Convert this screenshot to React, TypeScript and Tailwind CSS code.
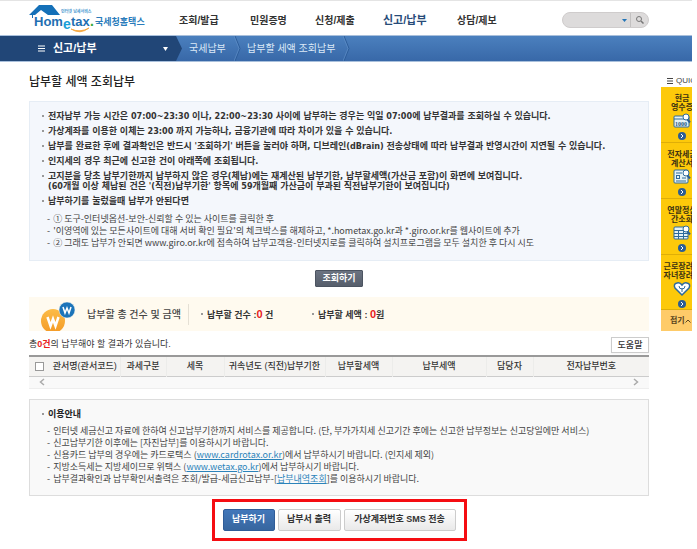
import type { ReactNode } from "react";
import clsx from "clsx";

const menus = [
    { label: "조회/발급", className: "w-[71px]" },
    { label: "민원증명", className: "w-[65px]" },
    { label: "신청/제출", className: "w-[68px]" },
    { label: "신고/납부", className: "w-[74px]", active: true },
    { label: "상담/제보", className: "w-[60px]" },
];

const notices: ReactNode[] = [
    "전자납부 가능 시간은 07:00~23:30 이나, 22:00~23:30 사이에 납부하는 경우는 익일 07:00에 납부결과를 조회하실 수 있습니다.",
    "가상계좌를 이용한 이체는 23:00 까지 가능하나, 금융기관에 따라 차이가 있을 수 있습니다.",
    "납부를 완료한 후에 결과확인은 반드시 '조회하기' 버튼을 눌러야 하며, 디브레인(dBrain) 전송상태에 따라 납부결과 반영시간이 지연될 수 있습니다.",
    "인지세의 경우 최근에 신고한 건이 아래쪽에 조회됩니다.",
    <>
        고지분을 당초 납부기한까지 납부하지 않은 경우(체납)에는 재계산된 납부기한, 납부할세액(가산금 포함)이 화면에 보여집니다.
        <br />
        (60개월 이상 체납된 건은 '(직전)납부기한' 항목에 59개월째 가산금이 부과된 직전납부기한이 보여집니다)
    </>,
    "납부하기를 눌렀을때 납부가 안된다면",
];

const troubleshooting: ReactNode[] = [
    "① 도구-인터넷옵션-보안-신뢰할 수 있는 사이트를 클릭한 후",
    "'이영역에 있는 모든사이트에 대해 서버 확인 필요'의 체크박스를 해제하고, *.hometax.go.kr과 *.giro.or.kr를 웹사이트에 추가",
    "② 그래도 납부가 안되면 www.giro.or.kr에 접속하여 납부고객용-인터넷지로를 클릭하여 설치프로그램을 모두 설치한 후 다시 시도",
];

const guides: ReactNode[] = [
    "인터넷 세금신고 자료에 한하여 신고납부기한까지 서비스를 제공합니다. (단, 부가가치세 신고기간 후에는 신고한 납부정보는 신고당일에만 서비스)",
    "신고납부기한 이후에는 [자진납부]를 이용하시기 바랍니다.",
    <>
        신용카드 납부의 경우에는 카드로택스 (<TextLink>www.cardrotax.or.kr</TextLink>)에서 납부하시기 바랍니다. (인지세 제외)
    </>,
    <>
        지방소득세는 지방세이므로 위택스 (<TextLink>www.wetax.go.kr</TextLink>)에서 납부하시기 바랍니다.
    </>,
    <>
        납부결과확인과 납부확인서출력은 조회/발급-세금신고납부-[<TextLink>납부내역조회</TextLink>]를 이용하시기 바랍니다.
    </>,
];

const columns = [
    { label: "관서명(관서코드)", className: "w-[70px]" },
    { label: "과세구분", className: "w-[46px]" },
    { label: "세목", className: "w-[58px]" },
    { label: "귀속년도 (직전)납부기한", className: "w-[101px]" },
    { label: "납부할세액", className: "w-[67px]" },
    { label: "납부세액", className: "w-[94px]" },
    { label: "담당자", className: "w-[47px]" },
    { label: "전자납부번호", className: "w-[116px]" },
];

const quickItems = [
    { lines: ["현금", "영수증"], icon: <CashIcon />, className: "h-[56px]" },
    { lines: ["전자세금", "계산서"], icon: <InvoiceIcon />, className: "h-[56px]" },
    { lines: ["연말정산", "간소화"], icon: <CalendarIcon />, className: "h-[56px]" },
    { lines: ["근로장려금", "자녀장려금"], icon: <HeartIcon />, className: "h-[55px]" },
];

function TextLink({ children }: { children: ReactNode }) {
    return (
        <a href="#" className="text-[#2b83ba] underline">
            {children}
        </a>
    );
}

function Logo() {
    return (
        <svg width="118" height="30" viewBox="0 0 118 30" role="img" aria-label="Hometax 국세청홈택스">
            <path d="M0 12 L10 2 L23 2 L31 12 L19 12 L12 7 L6 12 L4 12 L4 15 L3 15 L3 12 Z" fill="#1470b8" />
            <g fontFamily="'Liberation Sans', 'Noto Sans CJK KR', sans-serif" fontWeight="bold">
                <text x="32" y="10" fontSize="4" fill="#4a98cf">인터넷 납세서비스</text>
                <text x="5" y="23" fontSize="13" fill="#1f6fb2">Hom</text>
                <text x="34" y="26" fontSize="14" fill="#19a0d8">e</text>
                <text x="42" y="23" fontSize="13" fill="#1f6fb2">tax</text>
                <text x="61" y="23" fontSize="14" fill="#36a936">.</text>
                <text x="66" y="22" fontSize="9" fill="#2a7cbb">국세청홈택스</text>
            </g>
            <path d="M42 26 Q51 32 60 25 Q51 30 42 26 Z" fill="#f5a53a" stroke="#f5a53a" strokeWidth="0.8" />
        </svg>
    );
}

function Chevron({ className }: { className?: string }) {
    return (
        <svg width="7" height="25" viewBox="0 0 7 25" className={className} aria-hidden="true">
            <path d="M1 0 L6 12.5 L1 25" fill="none" stroke="#2c5c99" />
            <path d="M0 0 L5 12.5 L0 25" fill="none" stroke="#6495cb" strokeOpacity="0.6" />
        </svg>
    );
}

function Lens() {
    return (
        <>
            <path d="M14.5 6.5 L17 9.5" stroke="#2d5f94" strokeWidth="2" />
            <circle cx="13" cy="4" r="3" fill="#fff" stroke="#2d6a9c" />
        </>
    );
}

function CashIcon() {
    return (
        <svg width="18" height="16" viewBox="0 0 18 16" aria-hidden="true">
            <rect x="1" y="3" width="15" height="11" rx="1" fill="#e5f2f5" stroke="#2d6a9c" />
            <path d="M1 6 H16" stroke="#2d6a9c" />
            <text x="2" y="13" fontSize="6" fontFamily="Liberation Serif" fill="#24567f">1000</text>
            <Lens />
        </svg>
    );
}

function InvoiceIcon() {
    return (
        <svg width="18" height="16" viewBox="0 0 18 16" aria-hidden="true">
            <rect x="1" y="1" width="14" height="13" rx="1" fill="#e5f2f5" stroke="#2d6a9c" />
            <path d="M3 4 H9 M3 12 H13 M9 9 H13" stroke="#2d6a9c" />
            <rect x="3.5" y="6.5" width="3" height="3" fill="none" stroke="#2d6a9c" />
            <Lens />
        </svg>
    );
}

function CalendarIcon() {
    return (
        <svg width="18" height="16" viewBox="0 0 18 16" aria-hidden="true">
            <rect x="1" y="2" width="14" height="12" rx="1" fill="#e5f2f5" stroke="#2d6a9c" />
            <path d="M1 5.5 H15 M1 8.5 H15 M1 11.5 H15 M5.5 5 V14 M10.5 5 V14" stroke="#2d6a9c" />
            <Lens />
        </svg>
    );
}

function HeartIcon() {
    return (
        <svg width="18" height="16" viewBox="0 0 18 16" aria-hidden="true">
            <path d="M9 14 L2 7 Q0 3 4 2 Q7 1 9 4 Q11 1 14 2 Q18 3 16 7 Z" fill="#fff" stroke="#2d6a9c" strokeWidth="1.5" />
            <path d="M9 11 V7 M6 5 Q6 8 9 8 Q12 8 12 5" fill="none" stroke="#2d6a9c" />
        </svg>
    );
}

function CoinIcon() {
    return (
        <svg width="34" height="29" viewBox="0 0 34 29" className="self-end" aria-hidden="true">
            <defs>
                <linearGradient id="coin" x1="0" y1="0" x2="0" y2="1">
                    <stop offset="0" stopColor="#fcbc48" />
                    <stop offset="1" stopColor="#f49a26" />
                </linearGradient>
            </defs>
            <circle cx="12" cy="19" r="12" fill="url(#coin)" />
            <circle cx="26" cy="8" r="8" fill="#1c74b9" stroke="#fffaf0" strokeWidth="0.5" />
            <path d="M6.5 15 L9.5 24 L12 17 L14.5 24 L17.5 15" fill="none" stroke="#fff" strokeWidth="2.5" />
            <path d="M22 5 L24 11 L26 6 L28 11 L30 5" fill="none" stroke="#fff" strokeWidth="1.5" />
        </svg>
    );
}

function DashList({ items }: { items: ReactNode[] }) {
    return (
        <ul className="pl-[5px] font-['Noto_Sans_CJK_KR',sans-serif] leading-3 text-[#444]">
            {items.map((item, idx) => (
                <li key={idx} className="flex gap-[3px]">
                    <span>-</span>
                    <span>{item}</span>
                </li>
            ))}
        </ul>
    );
}

function Bullet() {
    return <span className="mt-1 size-[2px] shrink-0 bg-[#999]" />;
}

function Header() {
    return (
        <header>
            <div className="flex h-[35px] items-center border-t border-[#e4e4e4] pr-[43px] pl-[29px]">
                <a href="#" className="w-[150px] shrink-0">
                    <Logo />
                </a>
                <nav className="flex items-center pt-1 font-bold whitespace-nowrap">
                    {menus.map((menu) => (
                        <a
                            key={menu.label}
                            href="#"
                            className={clsx(
                                "shrink-0",
                                menu.className,
                                menu.active ? "text-[11px] text-[#274b78]" : "text-[10px] text-[#333]"
                            )}
                        >
                            {menu.label}
                        </a>
                    ))}
                </nav>
                <form className="mt-1 ml-auto flex h-4 w-[87px] items-center rounded-full border border-[#cfcccc] bg-[#dddbdb]">
                    <input type="text" aria-label="검색어" className="min-w-0 flex-1 px-2 text-[9px] outline-none" />
                    <svg width="5" height="3" viewBox="0 0 5 3" className="mr-[3px]" aria-hidden="true">
                        <path d="M0 0 H5 L2.5 3 Z" fill="#2275b8" />
                    </svg>
                    <button type="button" aria-label="검색" className="flex h-full w-[18px] items-center justify-center border-l border-[#c2c0c0]">
                        <svg width="8" height="8" viewBox="0 0 8 8" fill="none" stroke="#777" aria-hidden="true">
                            <circle cx="3" cy="3" r="2.5" />
                            <path d="M5 5 L7.5 7.5" strokeWidth="1.5" />
                        </svg>
                    </button>
                </form>
            </div>
            <div className="flex h-[27px] items-center border-y border-[#a9c0dc] bg-linear-to-b from-[#4b80be] to-[#3868a8]">
                <button type="button" className="flex h-full w-[176px] shrink-0 items-center bg-[#214677] pr-2 pl-[38px] text-white">
                    <svg width="7" height="7" viewBox="0 0 7 7" aria-hidden="true">
                        <path d="M0 1 H7 M0 3.5 H7 M0 6 H7" stroke="#fff" />
                    </svg>
                    <span className="ml-2 text-[11px] font-bold">신고/납부</span>
                    <svg width="5" height="4" viewBox="0 0 5 4" className="ml-auto" aria-hidden="true">
                        <path d="M0 0 H5 L2.5 4 Z" fill="#fff" />
                    </svg>
                </button>
                <svg width="6" height="25" viewBox="0 0 6 25" aria-hidden="true">
                    <path d="M0 0 L6 12.5 L0 25 Z" fill="#214677" />
                </svg>
                <a href="#" className="ml-[7px] w-[45px] text-[10px] whitespace-nowrap text-[#dce9f7]">국세납부</a>
                <Chevron />
                <a href="#" className="ml-[6px] w-[96px] text-[10px] whitespace-nowrap text-[#dce9f7]">납부할 세액 조회납부</a>
                <Chevron />
            </div>
        </header>
    );
}

function QuickMenu() {
    return (
        <aside className="w-[31px] shrink-0 overflow-hidden pt-3 whitespace-nowrap">
            <div className="flex h-[13px] items-center gap-[3px] pl-[6px] text-[8px] text-[#444]">
                <svg width="6" height="6" viewBox="0 0 6 6" className="shrink-0" aria-hidden="true">
                    <path d="M0 0.5 H6 M0 3 H6 M0 5.5 H6" stroke="#444" />
                </svg>
                QUICK
            </div>
            <ul className="w-[42px] bg-[#fdc90a] text-[8px] leading-[9px] font-bold text-[#3b3112]">
                {quickItems.map((item) => (
                    <li key={item.lines[0]} className={clsx("border-b border-[#dfae08]", item.className)}>
                        <a href="#" className="flex flex-col items-center pt-[7px]">
                            <span>{item.lines[0]}</span>
                            <span>{item.lines[1]}</span>
                            <span className="mt-px">{item.icon}</span>
                            <svg width="8" height="8" viewBox="0 0 8 8" className="mt-[3px]" aria-hidden="true">
                                <circle cx="4" cy="4" r="4" fill="#2b5d94" />
                                <path d="M3 2 L5 4 L3 6" fill="none" stroke="#fff" />
                            </svg>
                        </a>
                    </li>
                ))}
            </ul>
            <button type="button" className="flex h-[21px] w-[42px] items-center bg-[#fecb69] pl-[9px] text-[8px] font-bold text-[#5a4420]">
                접기
                <svg width="6" height="4" viewBox="0 0 6 4" aria-hidden="true">
                    <path d="M0.5 3.5 L3 1 L5.5 3.5" fill="none" stroke="#5a4420" />
                </svg>
            </button>
        </aside>
    );
}

export default function App() {
    return (
        <div className="overflow-hidden bg-white pr-[5px] font-['Liberation_Sans','Noto_Sans_CJK_KR',sans-serif] text-[9px] text-[#333]">
            <Header />
            <div className="flex">
                <main className="min-w-0 flex-1 pr-3 pl-[29px] whitespace-nowrap">
                    <h1 className="flex h-[39px] items-center text-[12px] font-medium text-[#222]">납부할 세액 조회납부</h1>

                    <section className="border border-[#e6edf5] bg-[#f4f7fc] pt-[9px] pr-3 pb-[11px] pl-3">
                        <ul className="flex flex-col gap-[5px] font-['DejaVu_Sans_Condensed','Liberation_Sans','Noto_Sans_CJK_KR',sans-serif] leading-[10px] font-bold text-[#333]">
                            {notices.map((notice, idx) => (
                                <li key={idx} className="flex gap-1">
                                    <Bullet />
                                    <span>{notice}</span>
                                </li>
                            ))}
                        </ul>
                        <div className="mt-[7px]">
                            <DashList items={troubleshooting} />
                        </div>
                    </section>

                    <div className="flex justify-center pt-[9px] pb-[10px]">
                        <button type="button" className="h-[17px] rounded-[1px] border border-[#4c5461] bg-linear-to-b from-[#6b7381] to-[#565e6b] px-[6px] leading-[15px] font-bold text-white">
                            조회하기
                        </button>
                    </div>

                    <section className="flex h-[34px] items-center bg-[#fffaef] pl-3">
                        <CoinIcon />
                        <h2 className="ml-3 w-[101px] text-[10px] font-medium text-[#444]">납부할 총 건수 및 금액</h2>
                        <div className="flex h-[21px] w-[124px] items-center gap-1 border-l border-[#e5e0d5] pl-3 font-bold">
                            <span className="size-[2px] bg-[#999]" />
                            <span>납부할 건수 :<b className="text-[11px] text-[#e8201c]">0</b> 건</span>
                        </div>
                        <div className="flex items-center gap-1 font-bold">
                            <span className="size-[2px] bg-[#999]" />
                            <span>납부할 세액 : <b className="text-[11px] text-[#e8201c]">0</b>원</span>
                        </div>
                    </section>

                    <div className="flex h-[24px] items-center justify-between pt-1">
                        <p>
                            총<b className="text-[#e8201c]">0건</b>의 납부해야 할 결과가 있습니다.
                        </p>
                        <button type="button" className="h-4 w-[38px] border border-[#ccc] bg-white leading-[14px] font-medium shadow-xs">
                            도움말
                        </button>
                    </div>

                    <table className="w-full table-fixed border-t-2 border-b border-t-[#999] border-b-[#ccc] bg-[#f4f3f1]">
                        <thead>
                            <tr className="h-[20px]">
                                <th className="w-[21px] pl-[6px] text-left">
                                    <input
                                        type="checkbox"
                                        aria-label="전체 선택"
                                        className="block size-[9px] appearance-none border border-[#999] bg-white"
                                    />
                                </th>
                                {columns.map((column) => (
                                    <th key={column.label} className={clsx("border-r border-[#ececea] p-0 font-medium last:border-r-0", column.className)}>
                                        {column.label}
                                    </th>
                                ))}
                            </tr>
                        </thead>
                    </table>
                    <div className="flex h-3 items-center justify-between border-b border-[#eee] bg-[#f9f9f9] px-[10px]">
                        <button type="button" aria-label="왼쪽으로">
                            <svg width="6" height="8" viewBox="0 0 6 8" className="block" aria-hidden="true">
                                <path d="M5 1 L1.5 4 L5 7" fill="none" stroke="#aaa" strokeWidth="1.5" />
                            </svg>
                        </button>
                        <button type="button" aria-label="오른쪽으로">
                            <svg width="6" height="8" viewBox="0 0 6 8" className="block" aria-hidden="true">
                                <path d="M1 1 L4.5 4 L1 7" fill="none" stroke="#aaa" strokeWidth="1.5" />
                            </svg>
                        </button>
                    </div>

                    <section className="mt-[10px] border border-[#ddd] bg-[#f9f9f9] pt-[9px] pr-3 pb-[10px] pl-3">
                        <h2 className="mb-[6px] flex gap-1 leading-[10px] font-bold text-[#222]">
                            <Bullet />
                            이용안내
                        </h2>
                        <DashList items={guides} />
                    </section>

                    {/* payment actions */}
                    <div className="mt-[3px] flex justify-center">
                        <div className="flex gap-[3px] border-[3px] border-[#f50d12] px-2 py-[7px] font-bold">
                            <button type="button" className="h-[22px] w-[52px] rounded-xs border border-[#2f5c98] bg-linear-to-b from-[#4277ba] to-[#37669f] text-white">
                                납부하기
                            </button>
                            <button type="button" className="h-[22px] w-[63px] rounded-xs border border-[#ccc] bg-linear-to-b from-white to-[#e9e9e9]">
                                납부서 출력
                            </button>
                            <button type="button" className="h-[22px] w-[112px] rounded-xs border border-[#ccc] bg-linear-to-b from-white to-[#e9e9e9]">
                                가상계좌번호 SMS 전송
                            </button>
                        </div>
                    </div>
                </main>
                <QuickMenu />
            </div>
        </div>
    );
}
